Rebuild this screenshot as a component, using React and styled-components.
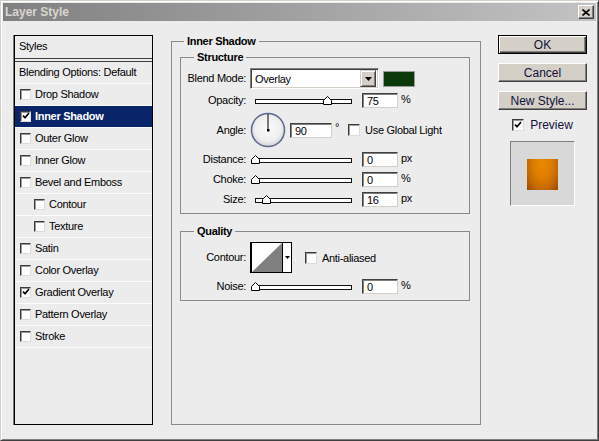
import styled, { createGlobalStyle } from "styled-components";

const GlobalStyle = createGlobalStyle`
  html, body {
    margin: 0;
    padding: 0;
    background: #ececec;
  }
  body {
    font-family: "Liberation Sans", Arial, sans-serif;
    font-size: 11px;
    letter-spacing: -0.3px;
    color: #000;
  }
`;

const styleRows = [
  { name: "Drop Shadow" },
  { name: "Inner Shadow", checked: true, active: true },
  { name: "Outer Glow" },
  { name: "Inner Glow" },
  { name: "Bevel and Emboss" },
  { name: "Contour", indent: true },
  { name: "Texture", indent: true },
  { name: "Satin" },
  { name: "Color Overlay" },
  { name: "Gradient Overlay", checked: true },
  { name: "Pattern Overlay" },
  { name: "Stroke" },
];

const Check = ({ checked, size = 12 }) => (
  <CheckBox $size={size}>
    {checked && (
      <svg width="8" height="8" viewBox="0 0 8 8">
        <polyline points="1,3.5 3,5.8 7,1" fill="none" stroke="#000" strokeWidth="1.7" />
      </svg>
    )}
  </CheckBox>
);

const Slider = ({ pos }) => (
  <SliderWrap>
    <Track />
    <Thumb style={{ left: `${5 + (pos / 100) * 97 - 4.5}px` }} width="9" height="9" viewBox="0 0 9 9">
      <polygon points="0.5,4.5 4.5,0.5 8.5,4.5 8.5,8.5 0.5,8.5" fill="#fff" stroke="#000" strokeWidth="1" />
    </Thumb>
  </SliderWrap>
);

const SliderRow = ({ label, pos, value, unit, mt }) => (
  <Row $h={16} $mt={mt}>
    <Label>{label}</Label>
    <Slider pos={pos} />
    <NumInput $w={36} $ml={8}>{value}</NumInput>
    <Unit>{unit}</Unit>
  </Row>
);

const App = () => {
  return (
    <>
      <GlobalStyle />
      <Window>
        <TitleBar>
          <Title>Layer Style</Title>
          <CloseButton>
            <svg width="8" height="7" viewBox="0 0 8 7">
              <path d="M0.5 0.5 L7.5 6.5 M7.5 0.5 L0.5 6.5" stroke="#000" strokeWidth="1.6" />
            </svg>
          </CloseButton>
        </TitleBar>

        <Body>
          <StylesList>
            <ListHeader>Styles</ListHeader>
            <ListRow>Blending Options: Default</ListRow>
            {styleRows.map((r) => (
              <ListRow key={r.name} $active={r.active} $indent={r.indent}>
                <Check checked={r.checked} size={11} />
                <RowLabel>{r.name}</RowLabel>
              </ListRow>
            ))}
          </StylesList>

          <OuterGroup>
            <Legend $ml={4}>Inner Shadow</Legend>

            <InnerGroup $pb={6}>
              <Legend $ml={13}>Structure</Legend>
              <Row $h={21} $mt={0}>
                <Label>Blend Mode:</Label>
                <Select>
                  <SelectText>Overlay</SelectText>
                  <SelectButton>
                    <svg width="7" height="4" viewBox="0 0 7 4">
                      <polygon points="0,0 7,0 3.5,4" fill="#000" />
                    </svg>
                  </SelectButton>
                </Select>
                <Swatch />
              </Row>
              <SliderRow label="Opacity:" pos={75} value="75" unit="%" mt={3} />
              <Row $h={36} $mt={4}>
                <Label>Angle:</Label>
                <svg width="36" height="36" viewBox="0 0 36 36">
                  <defs>
                    <radialGradient id="dialFill" cx="50%" cy="45%" r="55%">
                      <stop offset="0%" stopColor="#fbfbfb" />
                      <stop offset="70%" stopColor="#efefef" />
                      <stop offset="100%" stopColor="#d4d4d8" />
                    </radialGradient>
                  </defs>
                  <circle cx="18" cy="18" r="16.5" fill="url(#dialFill)" stroke="#5a6890" strokeWidth="1.5" />
                  <line x1="18" y1="18" x2="18" y2="2" stroke="#000" strokeWidth="1" />
                  <rect x="17" y="17" width="2.5" height="2.5" fill="#000" />
                </svg>
                <NumInput $w={42} $ml={4}>90</NumInput>
                <Unit $up>°</Unit>
                <CheckSpacer $ml={9}>
                  <Check />
                </CheckSpacer>
                <CheckLabel>Use Global Light</CheckLabel>
              </Row>
              <SliderRow label="Distance:" pos={0} value="0" unit="px" mt={3} />
              <SliderRow label="Choke:" pos={0} value="0" unit="%" mt={4} />
              <SliderRow label="Size:" pos={12} value="16" unit="px" mt={4} />
            </InnerGroup>

            <InnerGroup $mt={11} $pb={6}>
              <Legend $ml={13}>Quality</Legend>
              <Row $h={31} $mt={0}>
                <Label>Contour:</Label>
                <ContourPicker>
                  <svg width="30" height="29" viewBox="0 0 30 29">
                    <rect width="30" height="29" fill="#fff" />
                    <polygon points="0,29 30,0 30,29" fill="#808080" />
                  </svg>
                  <ContourArrow>
                    <svg width="5" height="3" viewBox="0 0 5 3">
                      <polygon points="0,0 5,0 2.5,3" fill="#000" />
                    </svg>
                  </ContourArrow>
                </ContourPicker>
                <CheckSpacer $ml={13}>
                  <Check />
                </CheckSpacer>
                <CheckLabel>Anti-aliased</CheckLabel>
              </Row>
              <SliderRow label="Noise:" pos={0} value="0" unit="%" mt={5} />
            </InnerGroup>
          </OuterGroup>

          <SideColumn>
            <Button $default>OK</Button>
            <Button>Cancel</Button>
            <Button>New Style...</Button>
            <PreviewToggle>
              <Check checked />
              <PreviewLabel>Preview</PreviewLabel>
            </PreviewToggle>
            <PreviewBox>
              <PreviewSquare />
            </PreviewBox>
          </SideColumn>
        </Body>
      </Window>
    </>
  );
};

const Window = styled.div`
  width: 599px;
  height: 441px;
  box-sizing: border-box;
  background: #ececec;
  border: 1px solid;
  border-color: #d4d0c8 #404040 #404040 #d4d0c8;
  box-shadow: inset 1px 1px #fff, inset -1px -1px #808080;
  padding: 2px;
  display: flex;
  flex-direction: column;
`;
const TitleBar = styled.div`
  height: 18px;
  flex: none;
  display: flex;
  align-items: center;
  justify-content: space-between;
  padding: 0 2px;
  background: linear-gradient(to right, #808080, #c3c3c3);
`;
const Title = styled.span`
  font-size: 12px;
  font-weight: bold;
  letter-spacing: 0;
  color: #d8d6d0;
`;
const CloseButton = styled.div`
  width: 16px;
  height: 14px;
  box-sizing: border-box;
  display: flex;
  align-items: center;
  justify-content: center;
  background: #d4d0c8;
  border: 1px solid;
  border-color: #fff #404040 #404040 #fff;
  box-shadow: inset -1px -1px #808080;
`;
const Body = styled.div`
  flex: 1;
  display: flex;
  align-items: stretch;
  padding: 14px 9px 13px 11px;
`;
const StylesList = styled.div`
  width: 139px;
  box-sizing: border-box;
  flex: none;
  border: 1px solid #000;
  box-shadow: -1px 0 #7a7a7a;
  display: flex;
  flex-direction: column;
`;
const ListHeader = styled.div`
  height: 26px;
  box-sizing: border-box;
  display: flex;
  align-items: center;
  padding: 0 0 2px 4px;
  border-bottom: 4px double #3c3c3c;
`;
const ListRow = styled.div`
  height: 22px;
  box-sizing: border-box;
  display: flex;
  align-items: center;
  gap: 3px;
  padding: 0 0 2px ${(p) => (p.$indent ? 18 : 4)}px;
  border-bottom: 1px solid #fbfbfb;
  background: ${(p) => (p.$active ? "#0a246a" : "transparent")};
  color: ${(p) => (p.$active ? "#fff" : "#000")};
  font-weight: ${(p) => (p.$active ? "bold" : "normal")};
  & > div:first-child {
    margin-left: 1px;
    margin-top: 1px;
  }
`;
const RowLabel = styled.span`
  margin-left: 1px;
`;
const CheckBox = styled.div`
  width: ${(p) => p.$size}px;
  height: ${(p) => p.$size}px;
  box-sizing: border-box;
  flex: none;
  display: flex;
  align-items: center;
  justify-content: center;
  background: #fff;
  border: 1px solid;
  border-color: #3a3a3a #dcdcdc #dcdcdc #3a3a3a;
  box-shadow: inset 1px 1px #9a9a9a;
`;
const OuterGroup = styled.fieldset`
  width: 310px;
  box-sizing: border-box;
  flex: none;
  margin: 0 0 0 18px;
  padding: 3px 10px 0 8px;
  min-width: 0;
  border: 1px solid #8a8a8a;
`;
const InnerGroup = styled.fieldset`
  margin: ${(p) => p.$mt || 0}px 0 0 0;
  padding: 4px 0 ${(p) => p.$pb}px 0;
  min-width: 0;
  border: 1px solid #8a8a8a;
`;
const Legend = styled.legend`
  font-weight: bold;
  line-height: 13px;
  padding: 0 3px;
  margin-left: ${(p) => p.$ml}px;
`;
const Row = styled.div`
  height: ${(p) => p.$h}px;
  margin-top: ${(p) => p.$mt}px;
  display: flex;
  align-items: center;
`;
const Label = styled.span`
  width: 65px;
  flex: none;
  text-align: right;
  margin-right: 4px;
  margin-top: -1px;
`;
const Select = styled.div`
  width: 129px;
  height: 21px;
  box-sizing: border-box;
  display: flex;
  align-items: center;
  justify-content: space-between;
  background: #fff;
  border: 1px solid;
  border-color: #808080 #fff #fff #808080;
  box-shadow: inset 1px 1px #404040, inset -1px -1px #d4d0c8;
  padding: 2px 2px 2px 3px;
`;
const SelectText = styled.span`
  padding-left: 1px;
`;
const SelectButton = styled.div`
  width: 16px;
  height: 17px;
  box-sizing: border-box;
  display: flex;
  align-items: center;
  justify-content: center;
  background: #d4d0c8;
  border: 1px solid;
  border-color: #d4d0c8 #404040 #404040 #d4d0c8;
  box-shadow: inset 1px 1px #fff, inset -1px -1px #808080;
`;
const Swatch = styled.div`
  width: 32px;
  height: 16px;
  box-sizing: border-box;
  margin-left: 4px;
  background: #0b390b;
  border: 1px solid #9a9a9a;
`;
const SliderWrap = styled.div`
  position: relative;
  width: 104px;
  height: 16px;
  flex: none;
`;
const Track = styled.div`
  position: absolute;
  left: 5px;
  right: 2px;
  top: 7px;
  height: 3px;
  background: #fff;
  border: 1px solid #111;
`;
const Thumb = styled.svg`
  position: absolute;
  top: 4px;
`;
const NumInput = styled.div`
  width: ${(p) => p.$w}px;
  height: 15px;
  box-sizing: border-box;
  flex: none;
  margin-left: ${(p) => p.$ml}px;
  padding: 1px 0 0 4px;
  display: flex;
  align-items: center;
  background: #fff;
  border: 1px solid;
  border-color: #404040 #d4d0c8 #d4d0c8 #404040;
  box-shadow: inset 1px 1px #808080;
`;
const Unit = styled.span`
  margin-left: 3px;
  margin-top: ${(p) => (p.$up ? -6 : -2)}px;
`;
const CheckSpacer = styled.div`
  margin-left: ${(p) => p.$ml}px;
`;
const CheckLabel = styled.span`
  margin-left: 5px;
`;
const ContourPicker = styled.div`
  width: 42px;
  height: 31px;
  box-sizing: border-box;
  display: flex;
  border: 1px solid #000;
  border-left-width: 2px;
`;
const ContourArrow = styled.div`
  flex: 1;
  display: flex;
  align-items: center;
  justify-content: center;
  background: #fff;
  border-left: 1px solid #000;
`;
const SideColumn = styled.div`
  width: 89px;
  flex: none;
  margin-left: 17px;
  display: flex;
  flex-direction: column;
  align-items: center;
`;
const Button = styled.div`
  width: 89px;
  height: 19px;
  box-sizing: border-box;
  margin-bottom: 9px;
  display: flex;
  align-items: center;
  justify-content: center;
  font-size: 12px;
  letter-spacing: 0;
  color: #10103a;
  background: #d4d0c8;
  border: 1px solid;
  border-color: ${(p) => (p.$default ? "#000" : "#fff #404040 #404040 #fff")};
  box-shadow: ${(p) =>
    p.$default
      ? "inset 1px 1px #fff, inset -1px -1px #404040, inset -2px -2px #808080"
      : "inset -1px -1px #808080"};
`;
const PreviewToggle = styled.div`
  display: flex;
  align-items: center;
  margin-top: -1px;
`;
const PreviewLabel = styled.span`
  font-size: 12px;
  letter-spacing: 0;
  color: #10103a;
  margin-left: 6px;
`;
const PreviewBox = styled.div`
  width: 65px;
  height: 65px;
  box-sizing: border-box;
  margin-top: 9px;
  display: flex;
  align-items: center;
  justify-content: center;
  background: #d8d8d8;
  border: 1px solid;
  border-color: #808080 #fff #fff #808080;
`;
const PreviewSquare = styled.div`
  width: 31px;
  height: 31px;
  margin-top: 1px;
  background: radial-gradient(ellipse at 50% 15%, #e88a00 0%, #dd7e00 40%, #c56800 70%, #974a00 100%);
`;

export default App;
